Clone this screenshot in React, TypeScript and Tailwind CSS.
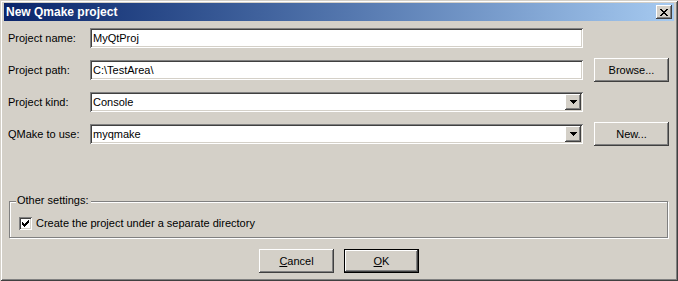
import type { ReactNode } from "react";

/* Win2000 style bevels */
const raised =
  "shadow-[inset_-1px_-1px_#404040,inset_1px_1px_#ffffff,inset_-2px_-2px_#808080]";
const sunken =
  "shadow-[inset_1px_1px_#808080,inset_-1px_-1px_#ffffff,inset_2px_2px_#404040,inset_-2px_-2px_#d4d0c8]";

const CloseGlyph = () => (
  <svg width="8" height="7" viewBox="0 0 8 7" shapeRendering="crispEdges">
    <path
      fill="#000"
      d="M0 0h2v1H0zM6 0h2v1H6zM1 1h2v1H1zM5 1h2v1H5zM2 2h4v1H2zM3 3h2v1H3zM2 4h4v1H2zM1 5h2v1H1zM5 5h2v1H5zM0 6h2v1H0zM6 6h2v1H6z"
    />
  </svg>
);

const ArrowGlyph = () => (
  <svg width="7" height="4" viewBox="0 0 7 4" shapeRendering="crispEdges">
    <path fill="#000" d="M0 0h7v1H0zM1 1h5v1H1zM2 2h3v1H2zM3 3h1v1H3z" />
  </svg>
);

const CheckGlyph = () => (
  <svg width="7" height="7" viewBox="0 0 7 7" shapeRendering="crispEdges">
    <path
      fill="#000"
      d="M6 0h1v1H6zM5 1h2v1H5zM0 2h1v1H0zM4 2h3v1H4zM0 3h2v1H0zM3 3h3v1H3zM0 4h5v1H0zM1 5h3v1H1zM2 6h1v1H2z"
    />
  </svg>
);

function TextField({ value }: { value: string }) {
  return (
    <div className={`w-[493px] h-[20px] bg-white flex items-center pl-[3px] ${sunken}`}>
      {value}
    </div>
  );
}

function Combo({ value }: { value: string }) {
  return (
    <div className={`w-[493px] h-[20px] bg-white flex items-center pl-[3px] pr-[2px] ${sunken}`}>
      <span className="flex-1">{value}</span>
      <div className={`w-[16px] h-[16px] bg-[#d4d0c8] flex items-center justify-center pb-[1px] ${raised}`}>
        <ArrowGlyph />
      </div>
    </div>
  );
}

function Button({ children, def }: { children: ReactNode; def?: boolean }) {
  if (def) {
    return (
      <div className="w-[75px] h-[24px] border border-black">
        <div className={`w-full h-full flex items-center justify-center ${raised}`}>{children}</div>
      </div>
    );
  }
  return (
    <div className={`w-[75px] h-[24px] flex items-center justify-center ${raised}`}>
      {children}
    </div>
  );
}

function Row({ label, children, action }: { label: string; children: ReactNode; action?: ReactNode }) {
  return (
    <div className="h-[24px] flex items-center">
      <span className="w-[82px]">{label}</span>
      {children}
      {action && <div className="ml-[11px]">{action}</div>}
    </div>
  );
}

export default function App() {
  return (
    <div className="w-[678px] h-[281px] bg-[#d4d0c8] flex flex-col px-[4px] pt-[3px] font-['Liberation_Sans',Arial,sans-serif] text-[11px] leading-[13px] text-black shadow-[inset_1px_1px_#d4d0c8,inset_-1px_-1px_#404040,inset_2px_2px_#ffffff,inset_-2px_-2px_#808080]">
      {/* Title bar */}
      <div className="h-[18px] bg-linear-to-r from-[#0a246a] to-[#a6caf0] flex items-center pl-[2px] pr-[2px]">
        <span className="flex-1 text-white font-bold text-[12px]">New Qmake project</span>
        <div className={`w-[16px] h-[14px] bg-[#d4d0c8] flex items-center justify-center ${raised}`}>
          <CloseGlyph />
        </div>
      </div>

      {/* Fields */}
      <div className="mt-[5px] pl-[4px] flex flex-col gap-[8px]">
        <Row label="Project name:">
          <TextField value="MyQtProj" />
        </Row>
        <Row label="Project path:" action={<Button>Browse...</Button>}>
          <TextField value="C:\TestArea\" />
        </Row>
        <Row label="Project kind:">
          <Combo value="Console" />
        </Row>
        <Row label="QMake to use:" action={<Button>New...</Button>}>
          <Combo value="myqmake" />
        </Row>
      </div>

      {/* Other settings group */}
      <div className="mt-[55px] ml-[5px] w-[659px] h-[37px] relative border border-[#808080] shadow-[1px_1px_#ffffff,inset_1px_1px_#ffffff]">
        <span className="absolute left-[6px] top-[-8px] bg-[#d4d0c8] pl-[1px] pr-[2px]">Other settings:</span>
        <div className="mt-[15px] ml-[9px] flex items-center gap-[4px]">
          <div className={`w-[13px] h-[13px] bg-white flex items-center justify-center ${sunken}`}>
            <CheckGlyph />
          </div>
          <span>Create the project under a separate directory</span>
        </div>
      </div>

      {/* Dialog buttons */}
      <div className="mt-[11px] flex justify-center gap-[10px]">
        <Button>
          <span>
            <span className="underline">C</span>ancel
          </span>
        </Button>
        <Button def>
          <span>
            <span className="underline">O</span>K
          </span>
        </Button>
      </div>
    </div>
  );
}
